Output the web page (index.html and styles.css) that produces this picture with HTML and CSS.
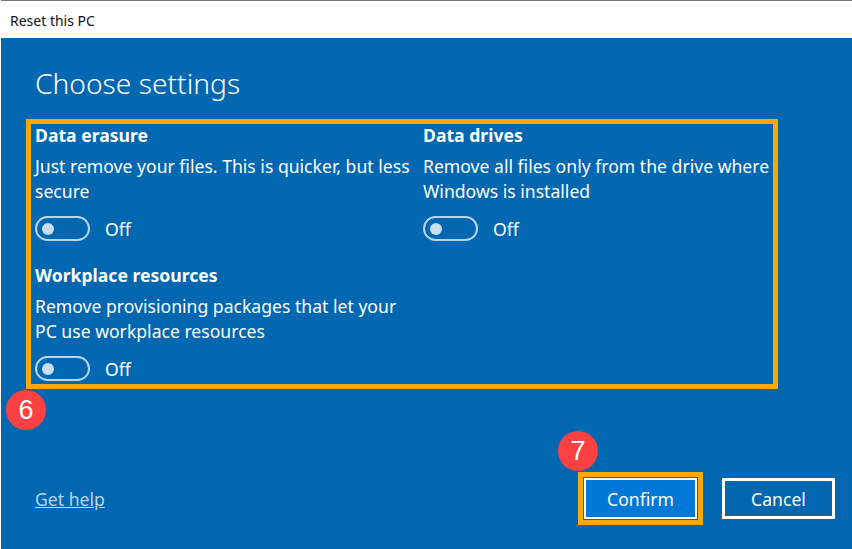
FILE: index.html
```html
<!DOCTYPE html>
<html lang="en">
<head>
  <meta charset="UTF-8">
  <title>Reset this PC</title>
  <link rel="stylesheet" href="styles.css">
</head>
<body>
  <div class="window">
    <header class="titlebar">Reset this PC</header>
    <main class="content">
      <h1>Choose settings</h1>
      <div class="settings-frame">
        <section class="setting">
          <h2>Data erasure</h2>
          <p>Just remove your files. This is quicker, but less secure</p>
          <div class="toggle-row"><span class="toggle"><span class="knob"></span></span><span>Off</span></div>
        </section>
        <section class="setting">
          <h2>Data drives</h2>
          <p>Remove all files only from the drive where Windows is installed</p>
          <div class="toggle-row"><span class="toggle"><span class="knob"></span></span><span>Off</span></div>
        </section>
        <section class="setting">
          <h2>Workplace resources</h2>
          <p>Remove provisioning packages that let your PC use workplace resources</p>
          <div class="toggle-row"><span class="toggle"><span class="knob"></span></span><span>Off</span></div>
        </section>
      </div>
      <span class="badge badge-six">6</span>
      <footer class="actions">
        <a href="#" class="help-link">Get help</a>
        <div class="buttons">
          <div class="confirm-frame">
            <span class="badge badge-seven">7</span>
            <button class="btn btn-primary">Confirm</button>
          </div>
          <button class="btn btn-cancel">Cancel</button>
        </div>
      </footer>
    </main>
  </div>
</body>
</html>
```

FILE: styles.css
```css
* {
  box-sizing: border-box;
}

body {
  margin: 0;
  font-family: "Noto Sans", Arial, sans-serif;
  background-color: #fff;
}

.window {
  width: 852px;
  height: 549px;
  display: flex;
  flex-direction: column;
  padding-left: 1px;
  overflow: hidden;
}

.titlebar {
  height: 38px;
  padding: 1px 0 0 9px;
  display: flex;
  align-items: center;
  font-size: 14px;
  color: #111;
  background-color: #fff;
  border-top: 1px solid #777;
}

.content {
  position: relative;
  flex: 1;
  display: flex;
  flex-direction: column;
  background-color: #0067b0;
  color: #fff;
  padding: 24px 17px 0 25px;
}

h1 {
  margin: 0 0 0 9px;
  font-size: 28.2px;
  font-weight: 300;
  line-height: 42px;
}

.settings-frame {
  width: 752px;
  height: 270px;
  margin-top: 15px;
  border: 5px solid #ffa800;
  padding: 0 0 0 4px;
  display: grid;
  grid-template-columns: 388px 1fr;
  grid-template-rows: 140px 1fr;
}

.setting h2 {
  margin: 0;
  font-size: 17.6px;
  font-weight: 700;
  line-height: 23px;
}

.setting p {
  max-width: 380px;
  margin: 7px 0 0;
  font-size: 17.6px;
  line-height: 25px;
}

.toggle-row {
  display: flex;
  align-items: center;
  gap: 15px;
  margin-top: 12px;
  font-size: 17.6px;
  line-height: 24px;
}

.toggle {
  width: 55px;
  height: 25px;
  border: 2px solid #b8d5ea;
  border-radius: 13px;
  display: flex;
  align-items: center;
  padding-left: 5px;
}

.knob {
  width: 12px;
  height: 12px;
  border-radius: 50%;
  background-color: #c8dff0;
}

.badge {
  position: absolute;
  width: 40px;
  height: 40px;
  border-radius: 50%;
  background-color: #fb4141;
  color: #fff;
  font-family: "Liberation Sans", Arial, sans-serif;
  font-size: 27px;
  line-height: 40px;
  text-align: center;
}

.badge-six {
  left: 5px;
  top: 352px;
}

.badge-seven {
  left: -25px;
  top: -46px;
}

.actions {
  display: flex;
  justify-content: space-between;
  align-items: center;
  margin-top: 83px;
  padding-left: 9px;
}

.help-link {
  color: #b5d5ef;
  font-size: 17.6px;
  text-decoration: underline;
}

.buttons {
  display: flex;
  align-items: center;
  gap: 19px;
}

.confirm-frame {
  position: relative;
  border: 5px solid #ffa800;
}

.btn {
  display: block;
  height: 41px;
  font-family: inherit;
  font-size: 17.6px;
  color: #fff;
  padding: 0;
}

.btn-primary {
  width: 115px;
  height: 43px;
  background-color: #0078d7;
  border: 3px solid #fff;
  outline: 1px solid #0067b0;
  outline-offset: -1px;
}

.btn-cancel {
  width: 113px;
  background-color: #0067b0;
  border: 3px solid #fff;
}
```
